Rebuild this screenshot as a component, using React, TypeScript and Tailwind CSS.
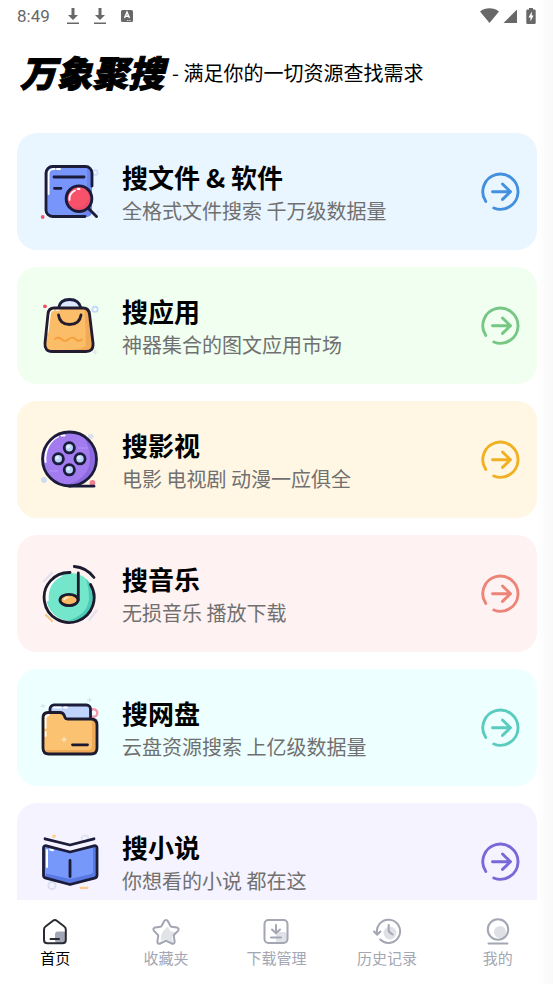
import type { ReactNode } from "react"
import { clsx } from "clsx"

const INK = "#1b1b3a"

function FileIcon() {
  return (
    <svg viewBox="0 0 64 64" className="size-16 shrink-0" fill="none" strokeLinecap="round" strokeLinejoin="round">
      <circle cx="57" cy="12.500" r="2.600" stroke="#cfdcff" strokeWidth="1.500" />
      <path d="M60 50v4M58 52h4" stroke="#d5e2fb" />
      <rect x="8.500" y="7" width="45" height="50" rx="7" fill="#7795fb" />
      <path d="M49 8h1a4 4 0 0 1 4 4v40a5 5 0 0 1-5 5H14c20-1 34-2 35-8z" fill="#6c86ee" />
      <path d="M10.500 34V14a5 5 0 0 1 5-5h1M19 9h3" stroke="#fff" strokeWidth="2" />
      <path d="M54 26V13a6.500 6.500 0 0 0-6.500-6.500h-33A6.500 6.500 0 0 0 8 13v37a6.500 6.500 0 0 0 6.500 6.500H47" stroke={INK} strokeWidth="2.800" />
      <path d="M16 17h30M16.500 28.300h6.500" stroke={INK} strokeWidth="2.800" />
      <path d="m50 48 8.500 8.500" stroke={INK} strokeWidth="2.900" />
      <circle cx="41" cy="38.700" r="12.800" fill="#f8516c" stroke={INK} strokeWidth="2.900" />
      <path d="M47 30a10 10 0 0 1-12 17 11.500 11.500 0 0 0 15-15z" fill="#e8486a" />
      <path d="M31.500 40a9.500 9.500 0 0 1 5.500-9.500M39.500 29h2" stroke="#fff" strokeWidth="1.800" />
      <circle cx="4.700" cy="57" r="1.900" fill="#f8516c" />
    </svg>
  )
}

function BagIcon() {
  return (
    <svg viewBox="0 0 64 64" className="size-16 shrink-0" fill="none" strokeLinecap="round" strokeLinejoin="round">
      <circle cx="57" cy="15.300" r="2.700" stroke="#c3d6fb" strokeWidth="1.700" />
      <path d="M57 56v4M55 58h4" stroke="#d7e2ee" />
      <circle cx="7" cy="12.300" r="1.900" fill="#ee5060" />
      <path d="M20.500 14C21.500 8 26 5.500 31.500 5.500S41.500 8 43 14" stroke={INK} strokeWidth="2.800" fill="#dce9ff" />
      <path d="M16 14h29c4 0 6 2 6.500 6L55 49c.600 6-2 8.500-7 8.500H14c-5 0-7.500-3-7-8.500l3-29c.400-4 2.500-6 6-6z" fill="#fbbd67" />
      <path d="M47 15c3 0 4 2 4.300 5L54.500 49c.400 5-2 8-7 8H14c16-1 31-1 33.500-5 1.500-4-1-25-.500-37z" fill="#f1aa55" />
      <path d="M9.500 38 11.700 21c.300-3.500 1.300-5 3.800-5M18.500 15.800h2.500" stroke="#fff" strokeWidth="2" />
      <path d="M16 14h29c4 0 6 2 6.500 6L55 49c.600 6-2 8.500-7 8.500H14c-5 0-7.500-3-7-8.500l3-29c.400-4 2.500-6 6-6z" stroke="#231c30" strokeWidth="2.800" />
      <path d="M20.500 21c1 7 5.500 9.500 11 9.500S42 28 43 21" stroke="#231c30" strokeWidth="2.800" />
      <path d="M17 45c3-2.500 5-1.500 7 .500s5 1.500 7-.500 5-1.500 7 .500 4 1.500 6 0" stroke="#f5a03e" strokeWidth="2" />
    </svg>
  )
}

function FilmIcon() {
  const holes = [
    [31.3, 19.8],
    [20.3, 30.8],
    [42, 30.8],
    [31.3, 41.8]
  ]
  return (
    <svg viewBox="0 0 64 64" className="size-16 shrink-0" fill="none" strokeLinecap="round" strokeLinejoin="round">
      <circle cx="52.700" cy="8.500" r="2.800" fill="#dbe1ee" />
      <circle cx="6" cy="52" r="2.900" fill="#cfdcf0" />
      <circle cx="54.500" cy="55" r="2.900" fill="#ee8292" />
      <circle cx="31.500" cy="31" r="27" fill="#a27bef" />
      <path d="M44 7c9 6 13 13 13 24S46 57 31.500 57h-5C42 54 52 45 52 31c0-10-3-18-8-24z" fill="#8c68de" />
      <path d="M7.500 34C6.500 22 12 12 20 8.500M23.500 7.500h3" stroke="#fff" strokeWidth="2" />
      <path d="M40 20h9M12 43h8" stroke="#b597f7" />
      <circle cx="31.500" cy="31" r="27" stroke={INK} strokeWidth="2.800" />
      <path d="M31.500 58.200H56" stroke={INK} strokeWidth="2.700" />
      {holes.map(([x, y]) => (
        <g key={`${x}-${y}`}>
          <circle cx={x} cy={y} r="5.100" fill="#b9d3fb" stroke={INK} strokeWidth="2.800" />
          <circle cx={x - 1} cy={y - 1} r="1.800" fill="#e4f0ff" />
        </g>
      ))}
    </svg>
  )
}

function MusicIcon() {
  return (
    <svg viewBox="0 0 64 64" className="size-16 shrink-0" fill="none" strokeLinecap="round" strokeLinejoin="round">
      <path d="m6 19 7.700-8M51.500 57.500l7-9" stroke="#e6e1ee" strokeWidth="2.500" />
      <path d="m8 53 6 6" stroke="#f6c98c" strokeWidth="2.300" />
      <circle cx="32.500" cy="35" r="24" fill="#73e6cb" />
      <path d="M48 17a24 24 0 0 1-16 42h-4c14-3 22-11 23-22 0-8-1-14-3-20z" fill="#4ccab5" />
      <path d="M9.500 38C8.500 27 14 17 23 13.500" stroke="#fff" strokeWidth="2.500" />
      <path d="M32 10.500A25 25 0 1 0 52.500 22.500" stroke="#1c1b2e" strokeWidth="2.800" />
      <path d="M36.300 4.500C44 5 51 9 56 15.500" stroke="#1c1b2e" strokeWidth="2.800" />
      <ellipse cx="31" cy="38" rx="9" ry="5.700" fill="#f9b962" stroke="#1c1b2e" strokeWidth="2.800" />
      <path d="M26 37.500c1-1.500 2.500-2 4-2" stroke="#fff1d6" strokeWidth="1.400" />
      <path d="M40.300 11v27" stroke="#1c1b2e" strokeWidth="2.800" />
    </svg>
  )
}

function FolderIcon() {
  return (
    <svg viewBox="0 0 64 64" className="size-16 shrink-0" fill="none" strokeLinecap="round" strokeLinejoin="round">
      <circle cx="55.500" cy="17" r="3.800" stroke="#f39bad" strokeWidth="2.400" />
      <path d="M5 8v4M3 10h4M51.500 2v4M49.500 4h4" stroke="#d2dfe8" />
      <rect x="12" y="9" width="40.500" height="30" rx="4" fill="#bfd3fb" stroke={INK} strokeWidth="2.800" />
      <path d="M16 11.500h7M26 11.500h3" stroke="#fff" strokeWidth="2" />
      <path d="M10 16.500h12c2.500 0 3.500 1 4.300 3l.700 2c.400 1.300 1 1.500 2.500 1.500H53c4 0 6 2 6 6v23c0 4-2 6-6 6H11c-4 0-6-2-6-6V22c0-3.500 2-5.500 5-5.500z" fill="#fbc271" />
      <path d="M54 24.500c3 0 4 2 4 4.500v23c0 3-2 5-5 5H11c-3 0-4-1.500-5-3h44c3 0 4-1 4-4z" fill="#eeaa58" />
      <path d="M7.500 32v-9c0-2.500 1-3.500 3-4M7.500 36v4" stroke="#fff" strokeWidth="2" />
      <path d="M10 16.500h12c2.500 0 3.500 1 4.300 3l.700 2c.400 1.300 1 1.500 2.500 1.500H53c4 0 6 2 6 6v23c0 4-2 6-6 6H11c-4 0-6-2-6-6V22c0-3.500 2-5.500 5-5.500z" stroke="#1d1a2f" strokeWidth="2.800" />
      <path d="M34.500 48.800h15" stroke="#1d1a2f" strokeWidth="2.800" />
      <path d="M26 41.500v4M24 43.500h4" stroke="#fde3b8" strokeWidth="1.400" />
    </svg>
  )
}

function BookIcon() {
  return (
    <svg viewBox="0 0 64 64" className="size-16 shrink-0" fill="none" strokeLinecap="round" strokeLinejoin="round">
      <circle cx="47" cy="9" r="3.500" stroke="#e2e3f1" strokeWidth="2" />
      <circle cx="14" cy="55.500" r="3.600" stroke="#dadef2" strokeWidth="2" />
      <path d="M42.500 57.800h7" stroke="#fbc98c" strokeWidth="2.200" />
      <path d="m14 5 3-.500 1.500 2-2 1.500-2 0z" fill="#fbd49a" />
      <path d="M7 8.800 32 15l24-6.200" stroke={INK} strokeWidth="2.800" />
      <path d="M8.500 15.800 32 22l24-6.200c1.700-.400 3 .500 3 2.200v27c0 1.800-1 2.800-2.500 3.200L32 54.500 8 48.200c-1.500-.400-2.500-1.400-2.500-3.200V18c0-1.700 1.300-2.600 3-2.200z" fill="#7798fb" />
      <path d="M57.500 17v28.500c0 1-1 1.700-2 2L32 53.500l-24-6.500v-3.500l24 5.500 21-5c1.500-.500 2-1.500 2-3V17z" fill="#5878e2" />
      <path d="M9 37V20M12 19.500l3 .800" stroke="#fff" strokeWidth="2" />
      <path d="M8.500 15.800 32 22l24-6.200c1.700-.400 3 .500 3 2.200v27c0 1.800-1 2.800-2.500 3.200L32 54.500 8 48.200c-1.500-.400-2.500-1.400-2.500-3.200V18c0-1.700 1.300-2.600 3-2.200z" stroke={INK} strokeWidth="2.800" />
      <path d="M32 30.500v16" stroke={INK} strokeWidth="2.800" />
    </svg>
  )
}

function ArrowIcon({ className }: { className: string }) {
  return (
    <svg viewBox="0 0 40 40" className={clsx("size-10 shrink-0", className)} fill="none" stroke="currentColor" strokeWidth="2.900" strokeLinecap="round" strokeLinejoin="round">
      <path d="M12.800 36A17.600 17.600 0 1 0 4.800 29.500" />
      <path d="M11.500 19.700H29.500M21.500 12l8 7.700-8 7.700" />
    </svg>
  )
}

const CARDS: { title: string; desc: string; bg: string; arrow: string; icon: ReactNode }[] = [
  { title: "搜文件 & 软件", desc: "全格式文件搜索 千万级数据量", bg: "bg-[#e9f6ff]", arrow: "text-[#4290de]", icon: <FileIcon /> },
  { title: "搜应用", desc: "神器集合的图文应用市场", bg: "bg-[#f0fff0]", arrow: "text-[#76c784]", icon: <BagIcon /> },
  { title: "搜影视", desc: "电影 电视剧 动漫一应俱全", bg: "bg-[#fff6e4]", arrow: "text-[#efb122]", icon: <FilmIcon /> },
  { title: "搜音乐", desc: "无损音乐 播放下载", bg: "bg-[#fff2f2]", arrow: "text-[#ec8577]", icon: <MusicIcon /> },
  { title: "搜网盘", desc: "云盘资源搜索 上亿级数据量", bg: "bg-[#edfffe]", arrow: "text-[#5accbf]", icon: <FolderIcon /> },
  { title: "搜小说", desc: "你想看的小说 都在这", bg: "bg-[#f5f3ff]", arrow: "text-[#7968d8]", icon: <BookIcon /> }
]

const TABS: { label: string; active?: boolean; icon: ReactNode }[] = [
  {
    label: "首页",
    active: true,
    icon: (
      <>
        <rect x="15" y="14.500" width="11" height="11.500" rx="3" fill="#a3a6b6" stroke="none" />
        <path d="M4 12.500c0-1.600.5-2.400 1.800-3.300l7.200-5.400c1.300-1 2.500-1 3.800 0L24 9.200c1.300.9 1.800 1.700 1.800 3.300V23c0 2.300-1 3.300-3.300 3.300h-15C5 26.300 4 25.300 4 23z" />
        <path d="M10.500 22h8.500" />
      </>
    )
  },
  {
    label: "收藏夹",
    icon: (
      <>
        <path d="m17 10 2.500 4.500 6 .5-4.500 5 1 5.500-7-3-5 1c-1-6 3-12 7-13.500z" fill="#e2e3e8" stroke="none" />
        <path d="M13.200 4c.8-1.500 2.800-1.500 3.600 0l2.500 4.800c.3.500.6.800 1.200.9l5.400.8c1.700.3 2.300 2.200 1.100 3.400l-3.800 3.900c-.4.400-.5.800-.4 1.400l.8 5.200c.3 1.700-1.300 2.800-2.800 2.100l-4.900-2.400c-.6-.3-1.200-.3-1.800 0l-4.900 2.400c-1.500.7-3.100-.4-2.800-2.100l.8-5.200c.1-.6 0-1-.4-1.400L3 13.900c-1.200-1.200-.6-3.100 1.100-3.400l5.400-.8c.6-.1.900-.4 1.200-.9z" />
      </>
    )
  },
  {
    label: "下载管理",
    icon: (
      <>
        <rect x="15" y="15" width="11" height="11" rx="3" fill="#e0e2e8" stroke="none" />
        <rect x="3.500" y="3" width="23" height="23" rx="4" />
        <path d="M15 8v8M11 12.500l4 3.800 4-3.800M10 20.500h10" />
      </>
    )
  },
  {
    label: "历史记录",
    icon: (
      <>
        <circle cx="18" cy="16" r="6.500" fill="#e0e1e7" stroke="none" />
        <path d="M5.200 17A11.600 11.600 0 1 1 8.300 22.500M2 14.500l3.200 3.200 3.200-3.200M16.700 8v6.500l3.800 3" />
      </>
    )
  },
  {
    label: "我的",
    icon: (
      <>
        <circle cx="17" cy="15" r="6" fill="#dfe0e5" stroke="none" />
        <circle cx="15" cy="12.500" r="10.200" />
        <path d="M5.500 26.500h19" />
      </>
    )
  }
]

function DownloadMark() {
  return (
    <svg viewBox="0 0 14 18" className="h-[18px] w-3.5" fill="currentColor">
      <path d="M5.500 1h3v7h3.500L7 13 2 8h3.500zM1 15.500h12V17H1z" />
    </svg>
  )
}

function StatusBar() {
  return (
    <div className="flex h-[30px] shrink-0 items-center px-[17px] text-[#686868]">
      <span className="w-[49px] font-['Roboto'] text-[17px] leading-[20px]">8:49</span>
      <div className="flex items-center gap-[13px]">
        <DownloadMark />
        <DownloadMark />
        <svg viewBox="0 0 14 14" className="size-3.5">
          <rect x="1" y="1" width="12" height="12" rx="1.500" fill="currentColor" />
          <path d="m4.500 9 2.500-6 2.500 6M5.500 7.200h3" fill="none" stroke="#fff" strokeWidth="1.400" />
          <path d="M7 11.500h4" stroke="#fff" strokeWidth=".7" strokeDasharray="1.200 .5" />
        </svg>
      </div>
      <div className="ml-auto flex items-center">
        <svg viewBox="0 0 19 16" className="mr-1 h-4 w-[19px]" fill="currentColor">
          <path d="M0 3.500C5.500-.8 13.500-.8 19 3.500L9.500 15z" />
        </svg>
        <svg viewBox="0 0 14 16" className="mr-[9px] h-4 w-3.5" fill="currentColor">
          <path d="M14 1.500V15H.5z" />
        </svg>
        <svg viewBox="0 0 10 18" className="h-[18px] w-2.5" fill="currentColor">
          <path d="M3 1h4v1.500h1.500A1.200 1.200 0 0 1 9.700 3.700v12.100a1.200 1.200 0 0 1-1.200 1.200h-7A1.200 1.200 0 0 1 .3 15.800V3.700a1.200 1.200 0 0 1 1.200-1.200H3z" />
          <path d="M5.800 4.500 2.500 10.500h2V14.500l3-6H5.800z" fill="#fff" />
        </svg>
      </div>
    </div>
  )
}

export default function App() {
  return (
    <div className="flex h-screen flex-col overflow-hidden bg-linear-to-r from-white from-97% to-[#f9f9f9] pt-px font-['Noto_Sans_CJK_SC',sans-serif] text-black">
      <StatusBar />

      <main className="min-h-0 flex-1 overflow-hidden pr-4 pl-[17px]">
        <header className="flex h-[84px] items-center gap-2 pl-[3px]">
          <h1 className="pb-1 text-[36px] leading-[40px] font-black italic [-webkit-text-stroke:1px_black]">万象聚搜</h1>
          <p className="text-[20px] leading-[30px]">- 满足你的一切资源查找需求</p>
        </header>

        <div className="mt-[18px] flex flex-col gap-[17px]">
          {CARDS.map((card) => (
            <button
              key={card.title}
              type="button"
              className={clsx("flex h-[117px] w-full items-center gap-5 rounded-[20px] pr-4 pl-[21px] text-left", card.bg)}
            >
              {card.icon}
              <span className="min-w-0 flex-1 pt-0.5">
                <span className="block text-[26px] leading-[36px] font-bold">{card.title}</span>
                <span className="block text-[20px] leading-[32px] text-[#707070]">{card.desc}</span>
              </span>
              <ArrowIcon className={card.arrow} />
            </button>
          ))}
        </div>
      </main>

      <nav className="grid h-[84px] shrink-0 grid-cols-5 pt-[17px]">
        {TABS.map((tab) => (
          <button
            key={tab.label}
            type="button"
            className={clsx("flex flex-col items-center", tab.active ? "text-[#292b33]" : "text-[#a3a6b3]")}
          >
            <svg viewBox="0 0 30 30" className="size-[30px]" fill="none" stroke="currentColor" strokeWidth="2" strokeLinecap="round" strokeLinejoin="round">
              {tab.icon}
            </svg>
            <span className={clsx("text-[15px] leading-[22px]", tab.active && "text-black")}>{tab.label}</span>
          </button>
        ))}
      </nav>
    </div>
  )
}
